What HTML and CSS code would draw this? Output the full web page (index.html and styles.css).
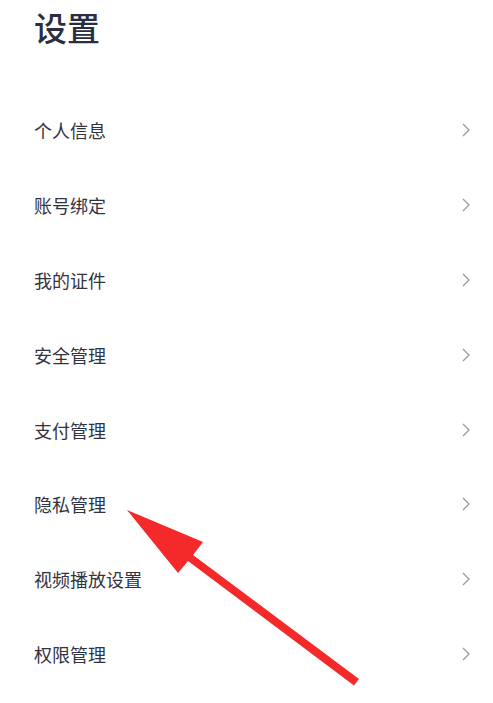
FILE: index.html
```html
<!DOCTYPE html>
<html lang="zh">
<head>
<meta charset="utf-8">
<link rel="stylesheet" href="styles.css">
</head>
<body>
<div class="page">
  <h1 class="title">设置</h1>
  <ul class="menu">
    <li class="item"><span class="label">个人信息</span><svg class="chev" viewBox="0 0 8 14"><path d="M1 1 L7 7 L1 13"/></svg></li>
    <li class="item"><span class="label">账号绑定</span><svg class="chev" viewBox="0 0 8 14"><path d="M1 1 L7 7 L1 13"/></svg></li>
    <li class="item"><span class="label">我的证件</span><svg class="chev" viewBox="0 0 8 14"><path d="M1 1 L7 7 L1 13"/></svg></li>
    <li class="item"><span class="label">安全管理</span><svg class="chev" viewBox="0 0 8 14"><path d="M1 1 L7 7 L1 13"/></svg></li>
    <li class="item"><span class="label">支付管理</span><svg class="chev" viewBox="0 0 8 14"><path d="M1 1 L7 7 L1 13"/></svg></li>
    <li class="item"><span class="label">隐私管理</span><svg class="chev" viewBox="0 0 8 14"><path d="M1 1 L7 7 L1 13"/></svg></li>
    <li class="item"><span class="label">视频播放设置</span><svg class="chev" viewBox="0 0 8 14"><path d="M1 1 L7 7 L1 13"/></svg></li>
    <li class="item"><span class="label">权限管理</span><svg class="chev" viewBox="0 0 8 14"><path d="M1 1 L7 7 L1 13"/></svg></li>
  </ul>
  <svg class="arrow" viewBox="0 0 493 703" width="493" height="703">
    <polygon points="127,510 203,542 193,555 359,679 354,685.5 188,561 178,573"/>
  </svg>
</div>
</body>
</html>
```
FILE: styles.css
```css
html, body {
  margin: 0;
  padding: 0;
  background: #ffffff;
}
body {
  font-family: "Noto Sans CJK SC", "Noto Sans", sans-serif;
  width: 493px;
  height: 703px;
  overflow: hidden;
}
.page {
  position: relative;
  width: 493px;
  height: 703px;
}
.title {
  margin: 0;
  padding: 4px 0 0 34px;
  font-size: 33px;
  line-height: 46px;
  font-weight: 500;
  color: #2b2e42;
}
.menu {
  list-style: none;
  margin: 43px 0 0 0;
  padding: 0 23px 0 34px;
}
.item {
  display: flex;
  align-items: center;
  justify-content: space-between;
  height: 74.8px;
}
.label {
  font-size: 18px;
  line-height: 24px;
  color: #333340;
}
.chev {
  width: 8px;
  height: 14px;
  fill: none;
  stroke: #9a9a9a;
  stroke-width: 1.3;
}
.arrow {
  position: absolute;
  left: 0;
  top: 0;
  pointer-events: none;
}
.arrow polygon {
  fill: #f42a2a;
}
```
